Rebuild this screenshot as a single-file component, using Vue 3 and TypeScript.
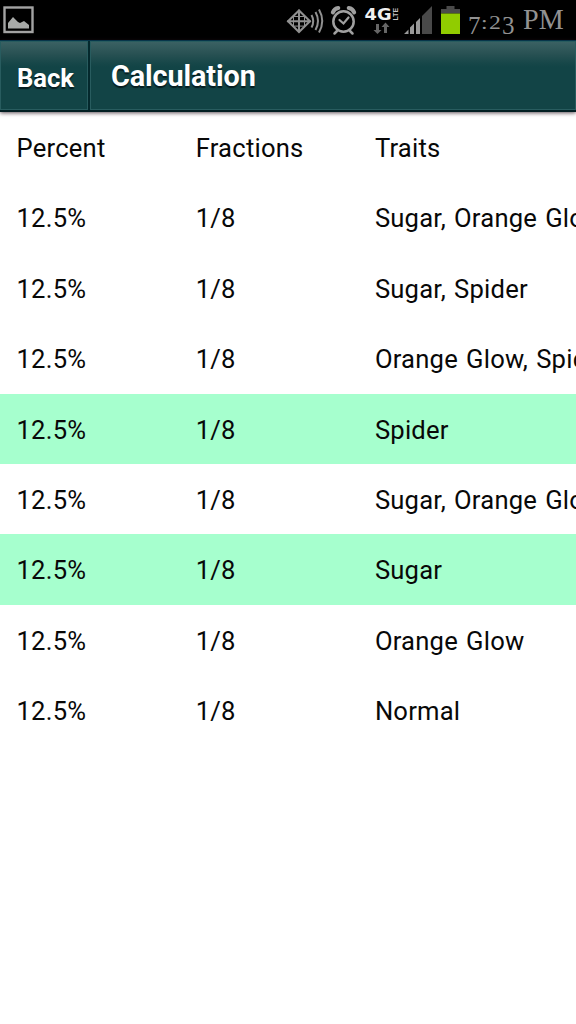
<script setup lang="ts">
interface Outcome {
  percent: string
  fraction: string
  traits: string
  highlighted?: boolean
}

const outcomes: Outcome[] = [
  { percent: '12.5%', fraction: '1/8', traits: 'Sugar, Orange Glow, Spider' },
  { percent: '12.5%', fraction: '1/8', traits: 'Sugar, Spider' },
  { percent: '12.5%', fraction: '1/8', traits: 'Orange Glow, Spider' },
  { percent: '12.5%', fraction: '1/8', traits: 'Spider', highlighted: true },
  { percent: '12.5%', fraction: '1/8', traits: 'Sugar, Orange Glow' },
  { percent: '12.5%', fraction: '1/8', traits: 'Sugar', highlighted: true },
  { percent: '12.5%', fraction: '1/8', traits: 'Orange Glow' },
  { percent: '12.5%', fraction: '1/8', traits: 'Normal' },
]
</script>

<template>
  <div class="screen">
    <div class="status-bar">
      <svg class="picture" width="40" height="40" viewBox="0 0 40 40">
        <rect x="4.5" y="7.500" width="28" height="24.500" fill="none" stroke="#a3a3a3" stroke-width="2.400" />
        <path d="M8 28.500V23l5-6 5 5 2 1 4-2 5 4v3.500z" fill="#a8aaa8" />
      </svg>
      <svg class="indicators" width="186" height="40" viewBox="280 0 186 40">
        <g fill="none" stroke="#909090" stroke-width="2">
          <path d="M288 21.300L299 10.500l11 10.800-11 10.700zM287 21.300h24M299 9.500v23" />
          <path d="M293.500 16.500h11v9.600h-11z" stroke-width="1" />
          <path d="M311.500 15q3.500 6.300 0 12.500M315.500 12q5 9 0 18M319 9.500q6.500 11.500 0 23" />
        </g>
        <g fill="none" stroke="#a0a0a0" stroke-linecap="round">
          <circle cx="343.500" cy="21.500" r="10.200" stroke-width="2.500" />
          <path d="M339.500 20l4 3.500 5-6" stroke-width="2.200" />
          <path d="M337 31l-2.500 2.500M350 31l2.500 2.500" stroke-width="2.500" />
          <path d="M332.800 12.500q1.500-4 5.500-4.500M348.700 8q4 .5 5.500 4.500" stroke-width="4" />
        </g>
        <text class="network" x="364.500" y="19.500" textLength="27" lengthAdjust="spacingAndGlyphs">4G</text>
        <text class="lte" transform="translate(397.500 20.500) rotate(-90)" textLength="12.500" lengthAdjust="spacingAndGlyphs">LTE</text>
        <path d="M376 24h3v6h2.500l-4 4-4-4h2.500zM384 33v-6h-2.500l4-4.500 4 4.500h-2.500v6z" fill="#666" />
        <path d="M404 34l4.500-4.500V34zM410 34v-6.500l4-4V34zM416 34V22l4-4v16z" fill="#999" />
        <path d="M422 34V16l10-10v28z" fill="#494949" />
        <path d="M441 13.500V9h5.500V6h8v3h5.500v4.500z" fill="#4a4a4a" />
        <rect x="441" y="13.500" width="19" height="20.500" fill="#91cc00" />
      </svg>
      <div class="clock">
        <span class="digit low">7</span><span class="digit colon">:</span><span class="digit">2</span><span class="digit low">3</span><span class="meridiem">PM</span>
      </div>
    </div>
    <header class="title-bar">
      <button class="back" type="button">Back</button>
      <h1 class="title">Calculation</h1>
    </header>
    <main class="table">
      <div class="row">
        <span>Percent</span><span>Fractions</span><span>Traits</span>
      </div>
      <div v-for="(item, index) in outcomes" :key="index" class="row" :class="{ highlighted: item.highlighted }">
        <span>{{ item.percent }}</span><span>{{ item.fraction }}</span><span>{{ item.traits }}</span>
      </div>
    </main>
  </div>
</template>

<style>
body {
  margin: 0;
  background: #fff;
}
</style>

<style scoped>
.screen {
  width: 576px;
  height: 1024px;
  overflow: hidden;
  background: #fff;
  font-family: Roboto, "Liberation Sans", sans-serif;
  color: #080808;
}
.status-bar {
  display: flex;
  height: 40px;
  background: #000;
}
.indicators {
  margin-left: 240px;
}
.network {
  fill: #f0f0f0;
  font: 700 16px "DejaVu Sans", sans-serif;
}
.lte {
  fill: #c4c4c4;
  font: 700 7px "Liberation Sans", sans-serif;
}
.clock {
  display: flex;
  align-items: baseline;
  height: 40px;
  margin-left: 2px;
  color: #929292;
  font-family: "Liberation Serif", serif;
  line-height: 38px;
}
.digit {
  width: 13px;
  font-size: 19px;
  transform: scaleX(1.25);
  transform-origin: left;
}
.low {
  font-size: 25px;
  transform: translateY(5px);
}
.colon {
  width: 8px;
}
.meridiem {
  margin-left: 8px;
  font-size: 29px;
  transform: scaleX(0.97);
  transform-origin: left;
}
.title-bar {
  display: flex;
  box-sizing: border-box;
  height: 72px;
  border-top: 1px solid #06354a;
  border-bottom: 2px solid #021e22;
  background: #124446;
  box-shadow: 0 1px 4px rgba(40, 20, 30, 0.75);
  color: #fff;
  text-shadow: 0 2px 1px #061d20;
}
.back,
.title {
  box-sizing: border-box;
  height: 69px;
  margin: 0;
  border: 1px solid #285c5f;
  background: linear-gradient(#3a6163 0, #285153 12px, #174749 21px, #124446 25px);
  font-family: inherit;
  font-weight: 700;
  text-shadow: inherit;
  color: inherit;
}
.back {
  width: 88px;
  padding: 4px 0 0 3px;
  font-size: 25.600px;
  text-align: center;
}
.title {
  flex: 1;
  margin-left: 2px;
  padding-left: 20px;
  box-shadow: -2px 0 #04292d;
  font-size: 28.800px;
  line-height: 69px;
  letter-spacing: -0.100px;
}
.row {
  display: grid;
  grid-template-columns: 179.200px 179.200px 1fr;
  height: 70.400px;
  padding-left: 16.500px;
  font-size: 25.600px;
  line-height: 73px;
  letter-spacing: 0.220px;
  word-spacing: 1.500px;
  white-space: nowrap;
}
.table {
  padding-top: 0.100px;
}
.highlighted {
  background: #a6ffce;
}
</style>
